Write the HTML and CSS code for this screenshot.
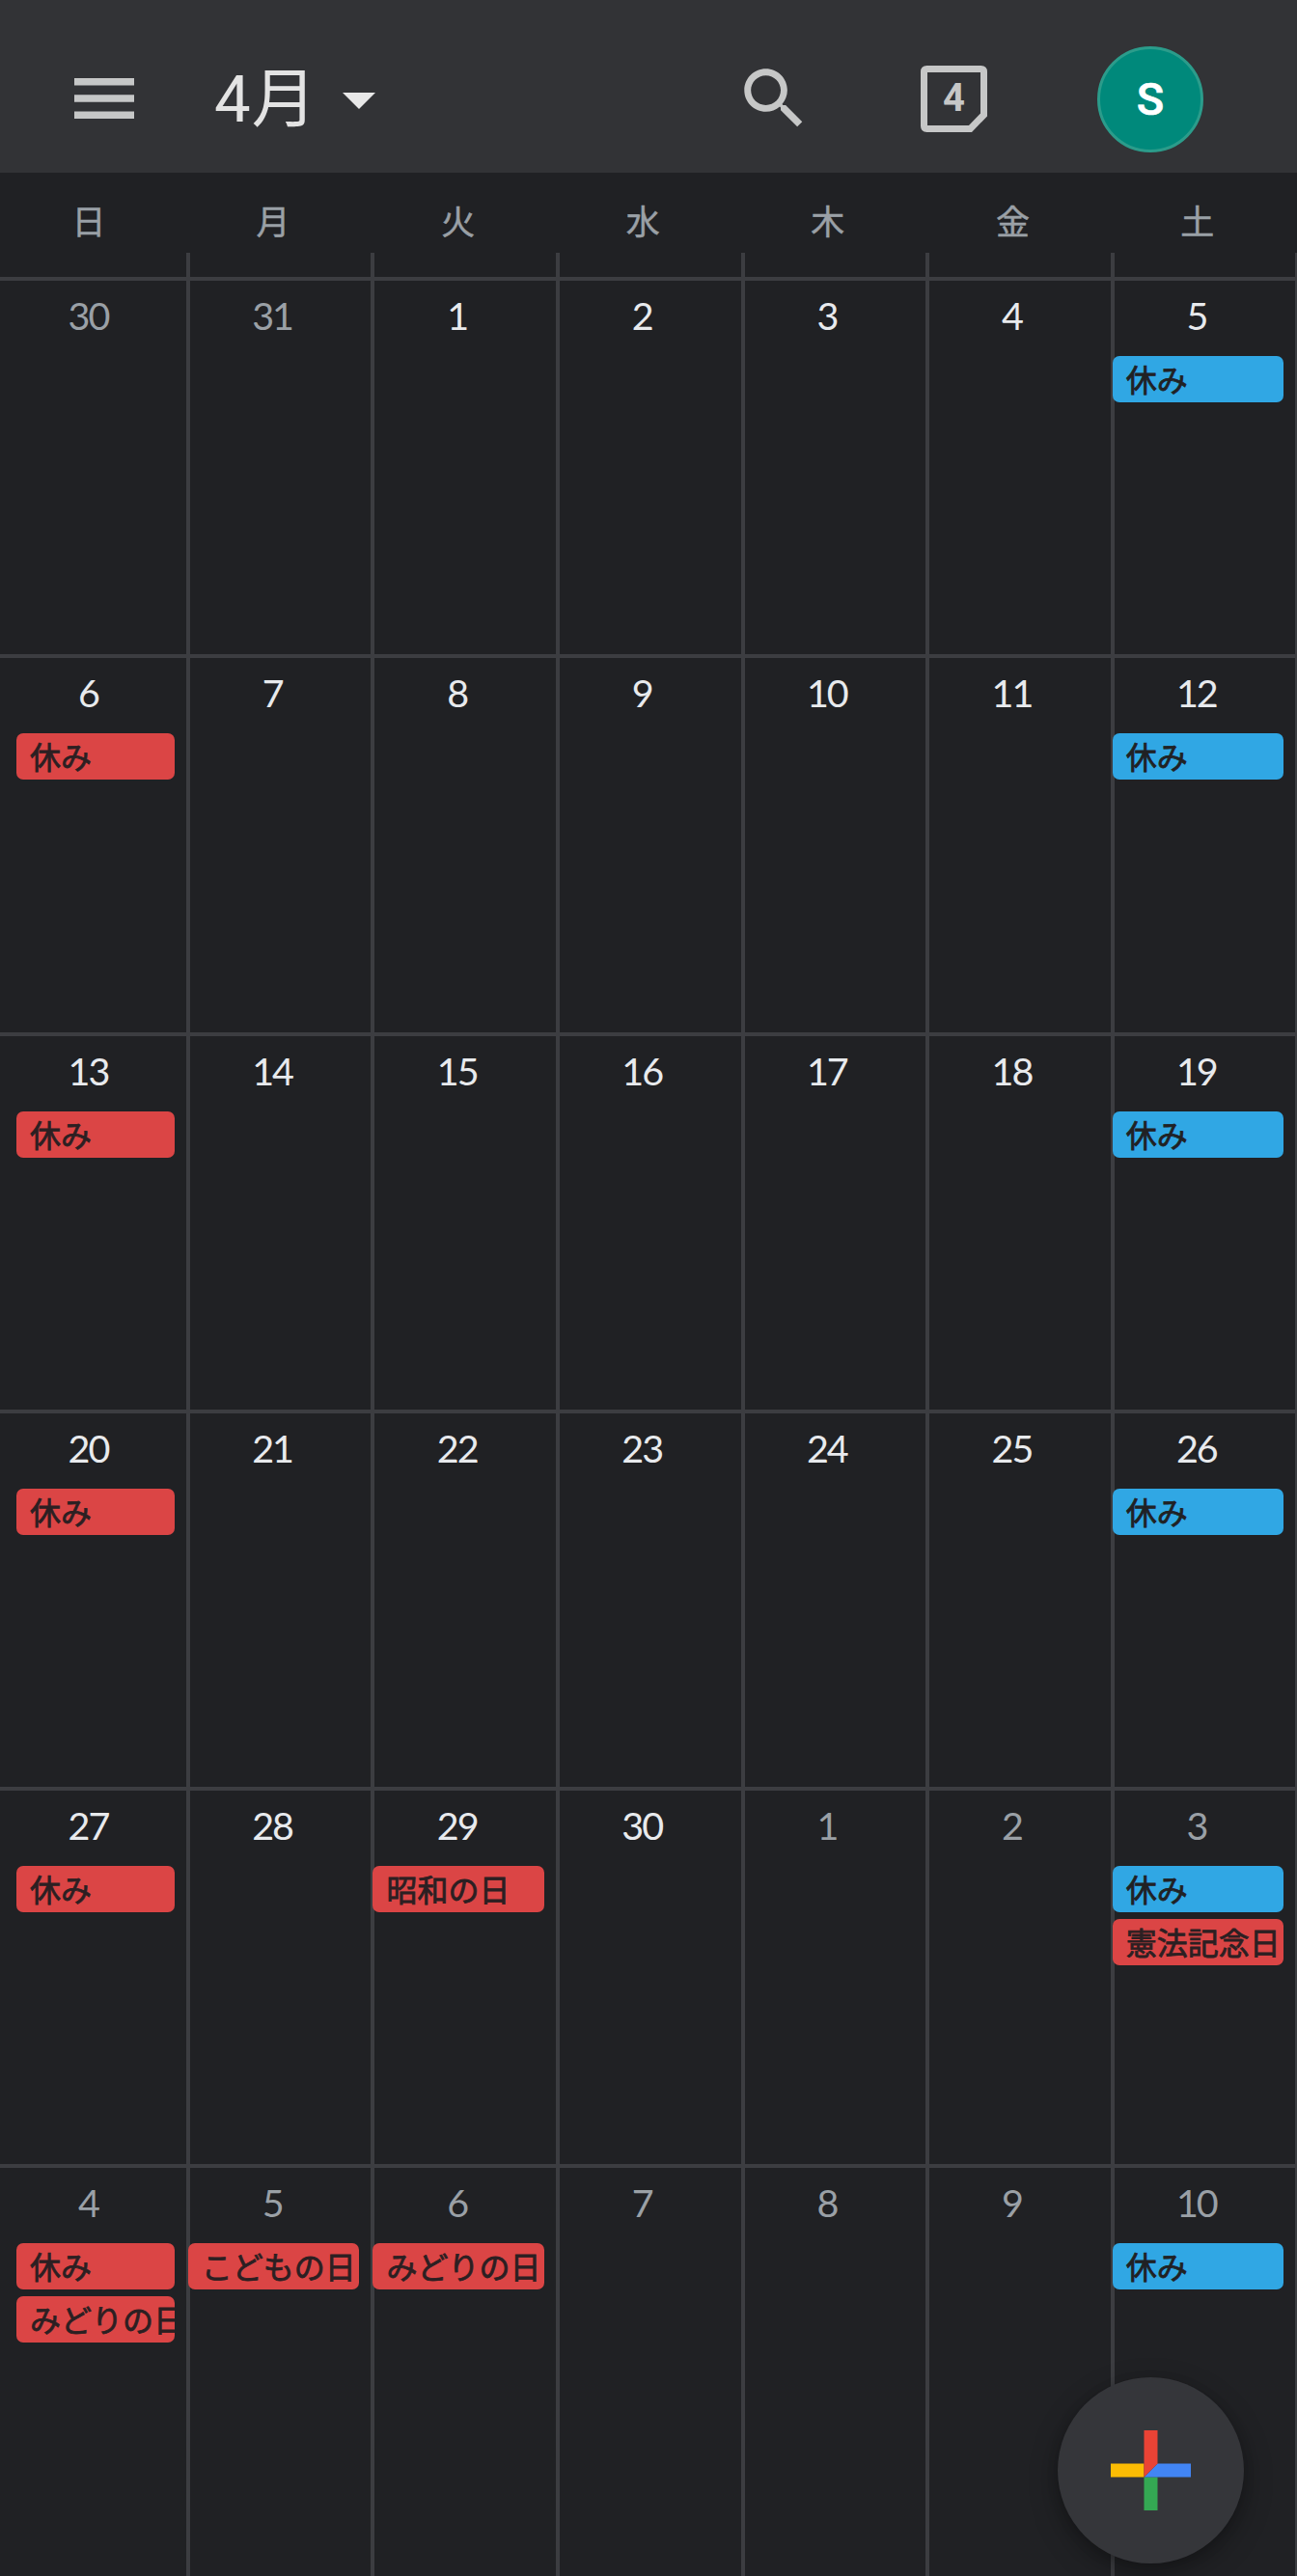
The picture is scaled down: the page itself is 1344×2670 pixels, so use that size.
FILE: index.html
```html
<!DOCTYPE html>
<html lang="ja">
<head>
<meta charset="utf-8">
<title>4月</title>
<link rel="stylesheet" href="styles.css">
</head>
<body>
<div class="app">
  <header class="topbar">
    <svg class="menu" viewBox="0 0 62 42"><path d="M0 0h62v7.4H0zM0 17.3h62v7.4H0zM0 34.6h62V42H0z"/></svg>
    <h1 class="title"><span class="title-num">4</span>月</h1>
    <svg class="caret" viewBox="0 0 34 17"><path d="M0 0h34L17 17z"/></svg>
    <svg class="search" viewBox="0 0 24 24"><path d="M15.5 14h-.79l-.28-.27C15.41 12.59 16 11.11 16 9.5 16 5.91 13.09 3 9.5 3S3 5.91 3 9.5 5.91 16 9.5 16c1.61 0 3.09-.59 4.23-1.57l.27.28v.79l5 4.99L20.49 19l-4.99-5zm-6 0C7.01 14 5 11.99 5 9.5S7.01 5 9.5 5 14 7.01 14 9.5 11.99 14 9.5 14z"/></svg>
    <div class="today">
      <svg class="today-frame" viewBox="0 0 69 69"><path d="M6.500 3.500H62.500Q65.500 3.500 65.500 6.500V51L51.500 65.500H6.500Q3.500 65.500 3.500 62.500V6.500Q3.500 3.500 6.500 3.500Z"/></svg>
      <span class="today-num">4</span>
    </div>
    <div class="avatar">S</div>
  </header>
  <div class="weekdays">
    <div class="weekday">日</div><div class="weekday">月</div><div class="weekday">火</div><div class="weekday">水</div><div class="weekday">木</div><div class="weekday">金</div><div class="weekday">土</div>
  </div>
  <main class="month">
    <div class="day other"><span class="num">30</span></div>
    <div class="day other"><span class="num">31</span></div>
    <div class="day"><span class="num">1</span></div>
    <div class="day"><span class="num">2</span></div>
    <div class="day"><span class="num">3</span></div>
    <div class="day"><span class="num">4</span></div>
    <div class="day"><span class="num">5</span><div class="event blue">休み</div></div>

    <div class="day"><span class="num">6</span><div class="event red">休み</div></div>
    <div class="day"><span class="num">7</span></div>
    <div class="day"><span class="num">8</span></div>
    <div class="day"><span class="num">9</span></div>
    <div class="day"><span class="num">10</span></div>
    <div class="day"><span class="num">11</span></div>
    <div class="day"><span class="num">12</span><div class="event blue">休み</div></div>

    <div class="day"><span class="num">13</span><div class="event red">休み</div></div>
    <div class="day"><span class="num">14</span></div>
    <div class="day"><span class="num">15</span></div>
    <div class="day"><span class="num">16</span></div>
    <div class="day"><span class="num">17</span></div>
    <div class="day"><span class="num">18</span></div>
    <div class="day"><span class="num">19</span><div class="event blue">休み</div></div>

    <div class="day"><span class="num">20</span><div class="event red">休み</div></div>
    <div class="day"><span class="num">21</span></div>
    <div class="day"><span class="num">22</span></div>
    <div class="day"><span class="num">23</span></div>
    <div class="day"><span class="num">24</span></div>
    <div class="day"><span class="num">25</span></div>
    <div class="day"><span class="num">26</span><div class="event blue">休み</div></div>

    <div class="day"><span class="num">27</span><div class="event red">休み</div></div>
    <div class="day"><span class="num">28</span></div>
    <div class="day"><span class="num">29</span><div class="event red">昭和の日</div></div>
    <div class="day"><span class="num">30</span></div>
    <div class="day other"><span class="num">1</span></div>
    <div class="day other"><span class="num">2</span></div>
    <div class="day other"><span class="num">3</span><div class="event blue">休み</div><div class="event red">憲法記念日</div></div>

    <div class="day other"><span class="num">4</span><div class="event red">休み</div><div class="event red">みどりの日</div></div>
    <div class="day other"><span class="num">5</span><div class="event red">こどもの日</div></div>
    <div class="day other"><span class="num">6</span><div class="event red">みどりの日</div></div>
    <div class="day other"><span class="num">7</span></div>
    <div class="day other"><span class="num">8</span></div>
    <div class="day other"><span class="num">9</span></div>
    <div class="day other"><span class="num">10</span><div class="event blue">休み</div></div>
  </main>
  <div class="fab">
    <svg class="plus" viewBox="0 0 83 83">
      <path fill="#fbbc04" d="M0 34.500h34.500v14H0z"/>
      <path fill="#34a853" d="M34.500 48.500h14V83h-14z"/>
      <path fill="#4285f4" d="M48.500 34.500H83v14H34.500z"/>
      <path fill="#ea4335" d="M34.500 0h14v34.500l-14 14z"/>
    </svg>
  </div>
</div>
</body>
</html>
```
FILE: styles.css
```css
* { box-sizing: border-box; }

body {
  margin: 0;
  background: #202124;
  font-family: "Noto Sans CJK JP", sans-serif;
}

.app {
  position: relative;
  width: 1344px;
  height: 2670px;
  overflow: hidden;
}

.topbar {
  display: flex;
  align-items: center;
  height: 179px;
  padding: 26px 97px 0 77px;
  background: #323336;
  color: #e3e3e3;
}

.menu { width: 62px; height: 42px; margin: 0 83px 1px 0; fill: #c6c7c7; }

.title {
  width: 98px;
  margin: 0 35px 5px 0;
  font-size: 67px;
  font-weight: 400;
  line-height: 80px;
  white-space: nowrap;
}

.title-num {
  margin-right: 1px;
  font-family: Roboto, sans-serif;
}

.caret { width: 34px; height: 17px; margin-top: 4px; fill: #e8e8e8; }

.search { width: 82.3px; height: 82.3px; margin: 0 110.5px 1px auto; fill: #c6c7c7; }

.today {
  display: grid;
  place-items: center;
  width: 69px;
  height: 69px;
  margin: 0 114px 1px 0;
}

.today-frame {
  grid-area: 1 / 1;
  width: 69px;
  height: 69px;
  fill: none;
  stroke: #c6c7c7;
  stroke-width: 7;
}

.today-num {
  grid-area: 1 / 1;
  font: 700 40px/40px Roboto, sans-serif;
  color: #c6c7c7;
}

.avatar {
  width: 110px;
  height: 110px;
  border: 3px solid #2b9c8b;
  border-radius: 50%;
  background: #00897b;
  color: #fff;
  font: 500 47px/104px Roboto, sans-serif;
  -webkit-text-stroke: .6px;
  text-align: center;
}

.weekdays,
.month {
  display: grid;
  grid-template-columns: 192.8px repeat(5, 191.6px) 193.2px;
}

.weekday {
  display: flex;
  flex-direction: column;
  height: 108px;
  padding-right: 11px;
  font-size: 35px;
  -webkit-text-stroke: .5px;
  line-height: 97px;
  text-align: center;
  color: #9aa0a6;
}

.weekday::after {
  content: "";
  flex: none;
  height: 25px;
  margin-top: -14px;
  margin-right: -11px;
  border-left: 4px solid #3c3d41;
}

.weekday:first-child { padding-right: 9px; }
.weekday:first-child::after { border-left: 0; }
.weekday:last-child { padding-right: 13px; }
.weekday:last-child::after { margin-right: -13px; border-right: 2px solid #3c3d41; }

.month { grid-template-rows: repeat(5, 391.3px) 427px; }

.day {
  border-top: 4px solid #3c3d41;
  border-left: 4px solid #3c3d41;
  padding-right: 12px;
  color: #e8eaed;
}

.day:nth-child(7n + 1) { border-left: 0; padding-left: 17px; }
.day:nth-child(7n) { border-right: 2px solid #3c3d41; }
.other { color: #9aa0a6; }

.num {
  display: block;
  height: 78px;
  padding-right: 5px;
  font: 400 39.500px/71px Lato, sans-serif;
  letter-spacing: -2px;
  text-align: center;
}

.day:nth-child(7n + 1) .num { margin-left: -17px; padding-right: 0; padding-left: 2px; }

.event {
  height: 48px;
  margin: 0 0 7px -2px;
  padding-left: 14px;
  border-radius: 7px;
  overflow: hidden;
  font-size: 32px;
  -webkit-text-stroke: .8px;
  line-height: 46px;
  white-space: nowrap;
  color: #202124;
}

.day:nth-child(7n + 1) .event { margin-left: 0; }

.blue { background: #30a7e4; }
.red { background: #db4545; color: #2c1f22; }

.fab {
  position: absolute;
  right: 55px;
  bottom: 13px;
  display: grid;
  place-items: center;
  width: 193px;
  height: 193px;
  border-radius: 50%;
  background: #35363a;
  box-shadow: 0 10px 30px rgba(0, 0, 0, .3), 0 3px 12px rgba(0, 0, 0, .15);
}

.plus { width: 83px; height: 83px; }
```
